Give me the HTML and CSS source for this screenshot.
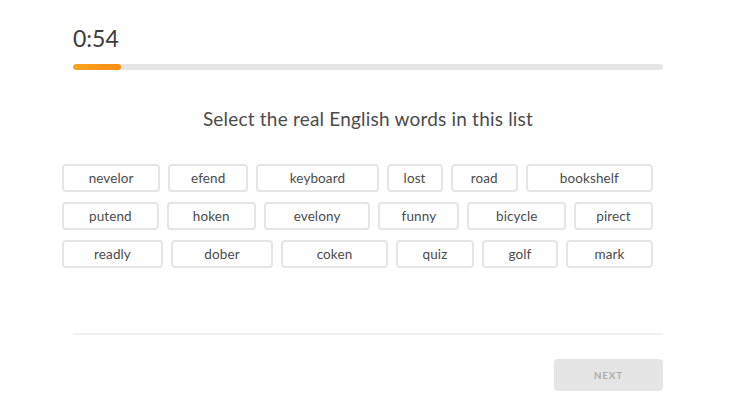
FILE: index.html
```html
<!DOCTYPE html>
<html>
<head>
<meta charset="utf-8">
<link rel="stylesheet" href="styles.css">
</head>
<body>
<div class="page">
  <div class="timer">0:54</div>
  <div class="progress"><div class="progress-fill"></div></div>
  <h1 class="title">Select the real English words in this list</h1>
  <div class="words">
    <div class="row row1">
      <button class="word">nevelor</button>
      <button class="word">efend</button>
      <button class="word">keyboard</button>
      <button class="word">lost</button>
      <button class="word">road</button>
      <button class="word">bookshelf</button>
    </div>
    <div class="row row2">
      <button class="word">putend</button>
      <button class="word">hoken</button>
      <button class="word">evelony</button>
      <button class="word">funny</button>
      <button class="word">bicycle</button>
      <button class="word">pirect</button>
    </div>
    <div class="row row3">
      <button class="word">readly</button>
      <button class="word">dober</button>
      <button class="word">coken</button>
      <button class="word">quiz</button>
      <button class="word">golf</button>
      <button class="word">mark</button>
    </div>
  </div>
  <div class="footer">
    <button class="next">Next</button>
  </div>
</div>
</body>
</html>
```
FILE: styles.css
```css
* { box-sizing: border-box; }
html, body { margin: 0; padding: 0; background: #fff; }
body {
  font-family: Lato, "Open Sans", "Liberation Sans", sans-serif;
  color: #4b4b4b;
  width: 740px;
  height: 414px;
  overflow: hidden;
}
.page {
  width: 590px;
  margin-left: 73px;
  padding-top: 23px;
}
.timer {
  font-size: 23px;
  line-height: 30px;
  color: #3c3c3c;
  height: 30px;
}
.progress {
  margin-top: 11px;
  height: 6px;
  border-radius: 3px;
  background: #e5e5e5;
  overflow: hidden;
}
.progress-fill {
  width: 48px;
  height: 100%;
  border-radius: 3px;
  background: linear-gradient(90deg, #ffa41c, #fb8c14);
}
.title {
  margin: 37px 0 0;
  font-size: 19px;
  line-height: 24px;
  font-weight: 400;
  letter-spacing: 0.2px;
  text-align: center;
  color: #4b4b4b;
}
.words {
  margin-top: 33px;
  margin-left: -11px;
  width: 591px;
  display: flex;
  flex-direction: column;
  gap: 10px;
}
.row {
  display: grid;
  column-gap: 8px;
}
.row1 { grid-template-columns: 98fr 80fr 122fr 56fr 67fr 127fr; }
.row2 { grid-template-columns: 97fr 89fr 107fr 81fr 99fr 79fr; }
.row3 { grid-template-columns: 101fr 102fr 107fr 78fr 76fr 87fr; }
.word {
  height: 28px;
  border: 2px solid #e5e5e5;
  border-radius: 4px;
  background: #fff;
  font-family: Lato, "Open Sans", "Liberation Sans", sans-serif;
  font-size: 13.5px;
  letter-spacing: 0.1px;
  color: #4b4b4b;
  padding: 0;
  min-width: 0;
}
.footer {
  margin-top: 65px;
  border-top: 2px solid #efefef;
  padding-top: 24px;
  display: flex;
  justify-content: flex-end;
}
.next {
  width: 109px;
  height: 32px;
  border: none;
  border-radius: 4px;
  background: #e5e5e5;
  color: #afafaf;
  font-family: Lato, "Open Sans", "Liberation Sans", sans-serif;
  font-size: 10px;
  font-weight: 700;
  letter-spacing: 0.8px;
  text-transform: uppercase;
}
```
